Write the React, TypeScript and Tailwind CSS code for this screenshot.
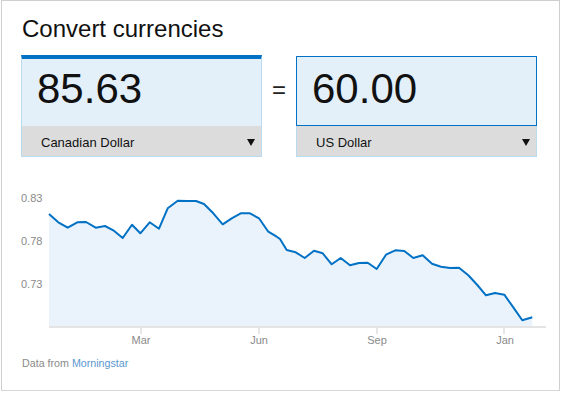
import React from "react";

const pts: [number, number][] = [
  [49, 214], [58.3, 222.3], [67.7, 227.7], [77.3, 222.3], [86, 222], [95.7, 227.7],
  [105, 226], [113.3, 230.3], [122.7, 238], [132, 224.7], [140.3, 233.3], [149.7, 222.3],
  [159, 228.7], [167.7, 208.3], [177.7, 200.7], [186.7, 201], [196, 201], [204, 204],
  [213.3, 213.3], [222.7, 224.3], [231.7, 218.3], [240.7, 213.3], [250, 213.3], [259, 218.3],
  [268.3, 231.7], [276.7, 236.7], [280, 239], [286.7, 250], [295.7, 252.3], [304.7, 258],
  [314, 250.7], [322.7, 253.3], [331.7, 264.3], [340.7, 258], [350, 265.3], [359, 263],
  [367.7, 262.7], [376.7, 269], [386, 254.7], [395.3, 250.3], [404.3, 251], [413.3, 258],
  [422.7, 255.3], [432, 263.7], [441, 266.7], [450, 268], [459, 267.7], [468.3, 275.3],
  [477.3, 285], [486, 295.3], [495, 293], [504.3, 294.7], [513.3, 307.3], [522.3, 320.3],
  [532.3, 317.3],
];

const linePath = pts.map((p, i) => `${i === 0 ? "M" : "L"}${p[0]},${p[1]}`).join(" ");
const areaPath = `${linePath} L532.3,326 L49,326 Z`;

function Triangle() {
  return (
    <svg width="8" height="7" viewBox="0 0 8 7">
      <polygon points="0,0 8,0 4,7" fill="#111" />
    </svg>
  );
}

export default function App() {
  return (
    <div className="w-[561px] h-[393px] bg-white pl-px" style={{ fontFamily: '"Liberation Sans", Arial, sans-serif' }}>
      <div className="w-[559px] h-[391px] border border-[#cfcfcf] border-b-[#d6d6d6] pl-[19px] pt-[14px] flex flex-col">
        <div className="text-[24px] leading-[28px] text-[#111] pl-px">Convert currencies</div>
        <div className="flex mt-[12px]">
          <div className="w-[241px] flex flex-col">
            <div className="h-[71px] bg-[#e3f0fa] border-t-4 border-t-[#0072c6] border-x border-x-[#b9daf1] pl-[15px] pt-[9px]">
              <div className="text-[42px] leading-[42px] text-[#111]">85.63</div>
            </div>
            <div className="h-[31px] bg-[#dcdcdc] border-x border-b border-[#b9daf1] flex items-center justify-between pl-[19px] pr-[6px] pt-[3px]">
              <span className="text-[13px] leading-[16px] text-[#111]">Canadian Dollar</span>
              <Triangle />
            </div>
          </div>
          <div className="w-[34px] flex justify-center pt-[21px] text-[24px] leading-[28px] text-[#222]">=</div>
          <div className="w-[241px] flex flex-col pt-px">
            <div className="h-[70px] bg-[#e3f0fa] border border-[#0072c6] pl-[15px] pt-[11px]">
              <div className="text-[42px] leading-[42px] text-[#111]">60.00</div>
            </div>
            <div className="h-[31px] bg-[#dcdcdc] border-x border-b border-[#b9daf1] flex items-center justify-between pl-[19px] pr-[6px] pt-[3px]">
              <span className="text-[13px] leading-[16px] text-[#111]">US Dollar</span>
              <Triangle />
            </div>
          </div>
        </div>
        <svg className="mt-[28px] block" width="530" height="165" viewBox="21 185 530 165">
          <path d={areaPath} fill="#eaf3fb" />
          <line x1="49" y1="327" x2="546" y2="327" stroke="#e4e4e4" strokeWidth="2" />
          {[141, 259, 377, 504].map((x) => (
            <line key={x} x1={x} y1="328" x2={x} y2="334" stroke="#cfcfcf" strokeWidth="1" />
          ))}
          <path d={linePath} fill="none" stroke="#0071c5" strokeWidth="2" strokeLinejoin="round" />
          <g fontSize="11" fill="#8a8a8a" fontFamily='"Liberation Sans", Arial, sans-serif'>
            <text x="21" y="202">0.83</text>
            <text x="21" y="245">0.78</text>
            <text x="21" y="288">0.73</text>
            <text x="141" y="344" textAnchor="middle">Mar</text>
            <text x="259" y="344" textAnchor="middle">Jun</text>
            <text x="377" y="344" textAnchor="middle">Sep</text>
            <text x="505" y="344" textAnchor="middle">Jan</text>
          </g>
        </svg>
        <div className="mt-[5px] text-[10.7px] leading-[16px] pl-px">
          <span className="text-[#8a8a8a]">Data from </span>
          <span className="text-[#5a97cf]">Morningstar</span>
        </div>
      </div>
    </div>
  );
}
